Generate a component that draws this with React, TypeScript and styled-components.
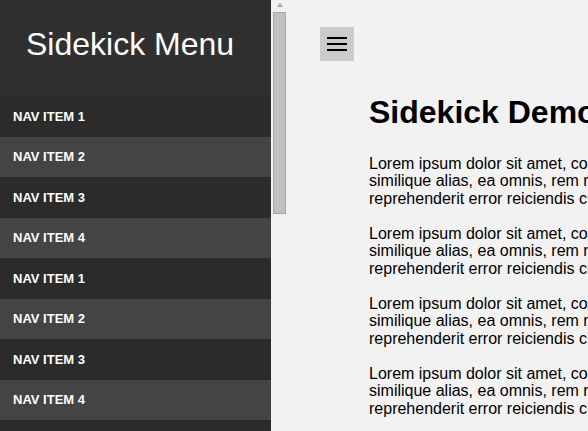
import React from "react";
import styled, { createGlobalStyle } from "styled-components";

const GlobalStyle = createGlobalStyle`
  html, body {
    margin: 0;
    padding: 0;
    height: 100%;
    overflow: hidden;
  }
  body {
    font-family: "Liberation Sans", Arial, sans-serif;
    background: #f2f2f2;
    color: #000;
  }
`;

const Layout = styled.div`
  display: flex;
  height: 100vh;
  overflow: hidden;
`;

const Sidebar = styled.aside`
  flex: 0 0 288px;
  display: flex;
  height: 100vh;
`;

const SidebarContent = styled.div`
  width: 271px;
  height: 100%;
  overflow: hidden;
  background: #2b2b2b;
`;

const ScrollTrack = styled.div`
  width: 17px;
  height: 100%;
  background: #f1f1f1;
  display: flex;
  flex-direction: column;
  align-items: center;
`;

const ScrollArrow = styled.div`
  flex: 0 0 12px;
  display: flex;
  align-items: center;
  justify-content: center;
  width: 17px;

  &::before {
    content: "";
    display: block;
    width: 0;
    height: 0;
    border-left: 3.5px solid transparent;
    border-right: 3.5px solid transparent;
    border-bottom: 4px solid #a3a3a3;
    margin-top: -3px;
  }
`;

const ScrollThumb = styled.div`
  width: 13px;
  box-sizing: border-box;
  background: #c1c1c1;
  border: 1px solid #a8a8a8;
`;

const SidebarHeader = styled.header`
  height: 96px;
  background: #303030;
  padding: 26px 0 0 26px;
  box-sizing: border-box;
`;

const SidebarTitle = styled.h1`
  margin: 0;
  font-size: 32px;
  font-weight: 400;
  color: #ffffff;
  line-height: normal;
`;

const NavList = styled.nav`
  display: flex;
  flex-direction: column;
`;

const NavItem = styled.a<{ $alt: boolean }>`
  display: flex;
  align-items: center;
  height: 40.5px;
  padding: 0 13px;
  background: ${(p) => (p.$alt ? "#444444" : "#2b2b2b")};
  color: #ffffff;
  font-size: 13px;
  font-weight: 700;
  text-decoration: none;
  text-transform: uppercase;
`;

const Main = styled.main`
  flex: 1 1 auto;
  min-width: 0;
  height: 100vh;
  overflow: hidden;
  padding: 27px 0 0 32px;
  box-sizing: border-box;
`;

const MenuButton = styled.button`
  display: flex;
  flex-direction: column;
  align-items: center;
  justify-content: center;
  gap: 4px;
  width: 34px;
  height: 34px;
  padding: 0;
  border: none;
  background: #cccccc;
  cursor: pointer;
`;

const Bar = styled.span`
  display: block;
  width: 20px;
  height: 2px;
  background: #000000;
`;

const Article = styled.article`
  margin: 33px 0 0 49px;
  width: 760px;
`;

const Heading = styled.h1`
  margin: 0 0 24px;
  font-size: 32px;
  font-weight: 700;
  line-height: normal;
`;

const Paragraph = styled.p`
  margin: 0 0 17.8px;
  font-size: 16px;
  line-height: 17.4px;
`;

const Line = styled.span`
  display: block;
  white-space: nowrap;
`;

const navLabels = ["Nav Item 1", "Nav Item 2", "Nav Item 3", "Nav Item 4"];
const navItems = Array.from({ length: 20 }, (_, i) => navLabels[i % 4]);

const lines = [
  "Lorem ipsum dolor sit amet, consectetur adipisicing elit. Ipsam, dolorum,",
  "similique alias, ea omnis, rem repellendus voluptatibus nemo fugit eius",
  "reprehenderit error reiciendis cum magnam illo quod ullam nesciunt.",
];

const viewportHeight = 431;
const contentHeight = 96 + navItems.length * 40.5;
const trackHeight = viewportHeight - 12;

export default function App() {
  const thumbHeight = Math.round((trackHeight * viewportHeight) / contentHeight);
  return (
    <>
      <GlobalStyle />
      <Layout>
        <Sidebar>
          <SidebarContent>
            <SidebarHeader>
              <SidebarTitle>Sidekick Menu</SidebarTitle>
            </SidebarHeader>
            <NavList>
              {navItems.map((label, i) => (
                <NavItem key={i} href="#" $alt={i % 2 === 1}>
                  {label}
                </NavItem>
              ))}
            </NavList>
          </SidebarContent>
          <ScrollTrack aria-hidden="true">
            <ScrollArrow />
            <ScrollThumb style={{ height: thumbHeight + 3 }} />
          </ScrollTrack>
        </Sidebar>
        <Main>
          <MenuButton aria-label="Toggle menu">
            <Bar />
            <Bar />
            <Bar />
          </MenuButton>
          <Article>
            <Heading>Sidekick Demo</Heading>
            {Array.from({ length: 6 }, (_, i) => (
              <Paragraph key={i}>
                {lines.map((l, j) => (
                  <Line key={j}>{l}</Line>
                ))}
              </Paragraph>
            ))}
          </Article>
        </Main>
      </Layout>
    </>
  );
}
